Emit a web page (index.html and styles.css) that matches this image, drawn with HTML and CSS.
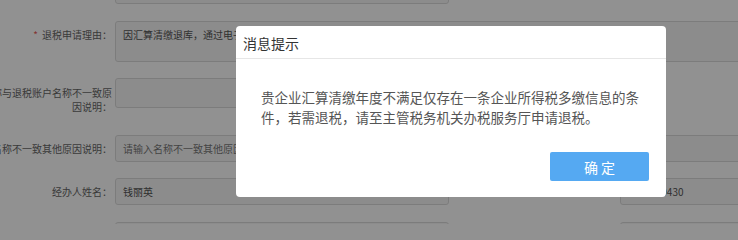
FILE: index.html
```html
<!DOCTYPE html>
<html lang="zh-CN">
<head>
<meta charset="utf-8">
<title>消息提示</title>
<link rel="stylesheet" href="styles.css">
</head>
<body>
<div class="page">
  <div class="form">
    <div class="row r0">
      <div class="label"></div>
      <div class="field half h30"></div>
    </div>
    <div class="row r1">
      <div class="label top7"><span class="req">*</span>退税申请理由：</div>
      <div class="field grow h41 textline">因汇算清缴退库，通过电子税务局申请退还多缴税款</div>
    </div>
    <div class="row r2">
      <div class="label top8">纳税人名称与退税账户名称不一致原因说明：</div>
      <div class="field half h30"></div>
    </div>
    <div class="row r3">
      <div class="label lh27">纳税人名称不一致其他原因说明：</div>
      <div class="field grow h27 ph">请输入名称不一致其他原因说明</div>
    </div>
    <div class="row r4">
      <div class="label lh27">经办人姓名：</div>
      <div class="field half h27">钱丽英</div>
      <div class="label2 lh27">联系电话：</div>
      <div class="field grow h27">1395880430</div>
    </div>
    <div class="row r5">
      <div class="label lh27"></div>
      <div class="field half h27"></div>
      <div class="label2 lh27"></div>
      <div class="field grow h27"></div>
    </div>
  </div>
</div>

<div class="mask"></div>

<div class="dialog">
  <div class="dialog-header">消息提示</div>
  <div class="dialog-body">贵企业汇算清缴年度不满足仅存在一条企业所得税多缴信息的条件，若需退税，请至主管税务机关办税服务厅申请退税。</div>
  <div class="dialog-footer">
    <button class="btn-ok">确 定</button>
  </div>
</div>
</body>
</html>
```

FILE: styles.css
```css
html, body {
  margin: 0;
  padding: 0;
  height: 224px;
  overflow: hidden;
  background: #ffffff;
  font-family: "Noto Sans CJK SC", "Liberation Sans", sans-serif;
}

.page {
  width: 820px;
  margin-left: -49px;
}

.form {
  margin-top: -26px;
}

.row {
  display: flex;
  align-items: flex-start;
}

.r1 { margin-top: 17px; }
.r2 { margin-top: 16px; }
.r3 { margin-top: 21px; }
.r4 { margin-top: 16px; }
.r5 { margin-top: 17px; }

.label {
  flex: none;
  width: 161px;
  padding-right: 3px;
  text-align: right;
  font-size: 10px;
  line-height: 14px;
  color: #666666;
}

.label2 {
  flex: none;
  width: 168px;
  padding-right: 3px;
  text-align: right;
  font-size: 10px;
  color: #666666;
  white-space: nowrap;
}

.top7 { padding-top: 7px; }
.top8 { padding-top: 8px; }
.lh27 { line-height: 27px; }

.req {
  color: #e85a5a;
  margin-right: 4px;
}

.field {
  box-sizing: border-box;
  border: 1px solid #dadada;
  background: #f7f7f7;
  border-radius: 3px;
  font-size: 10px;
  color: #555555;
  padding: 0 7px;
  white-space: nowrap;
  overflow: hidden;
  line-height: 25px;
}

.half { flex: none; width: 334px; }
.grow { flex: 1; }

.h27 { height: 27px; }
.h30 { height: 30px; }
.h41 { height: 41px; }

.textline {
  padding-top: 6px;
  line-height: 14px;
}

.ph { color: #777777; }

.mask {
  position: fixed;
  left: 0;
  top: 0;
  right: 0;
  bottom: 0;
  background: rgba(0, 0, 0, 0.43);
}

.dialog {
  position: fixed;
  left: 236px;
  top: 26px;
  width: 430px;
  background: #ffffff;
  border-radius: 4px;
  display: flex;
  flex-direction: column;
}

.dialog-header {
  height: 29px;
  padding: 3px 7px 0;
  line-height: 29px;
  font-size: 14px;
  color: #333333;
  border-bottom: 1px solid #e6e6e6;
}

.dialog-body {
  padding: 28px 25px 0;
  font-size: 13.5px;
  line-height: 20px;
  color: #555555;
}

.dialog-footer {
  display: flex;
  justify-content: flex-end;
  padding: 25px 17px 16px;
}

.btn-ok {
  width: 99px;
  height: 29px;
  border: none;
  border-radius: 2px;
  background: #55a9f2;
  color: #ffffff;
  font-family: "Noto Sans CJK SC", "Liberation Sans", sans-serif;
  font-size: 14px;
  padding: 0;
  white-space: pre;
}
```
